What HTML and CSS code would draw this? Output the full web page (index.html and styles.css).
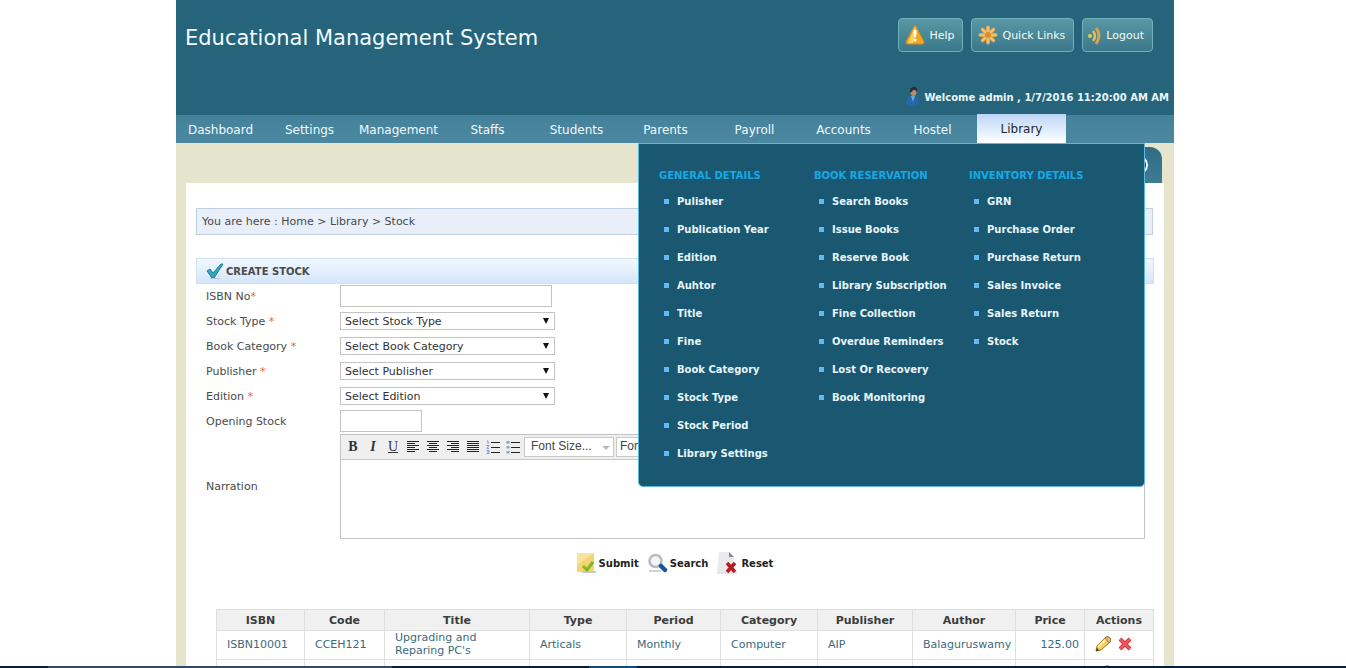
FILE: index.html
```
<!DOCTYPE html>
<html lang="en">
<head>
<meta charset="utf-8">
<title>Educational Management System</title>
<link rel="stylesheet" href="styles.css">
</head>
<body>
<div class="page">
  <header class="header">
    <h1 class="title">Educational Management System</h1>
    <div class="header-side">
      <div class="header-buttons">
        <button class="hbtn" type="button">
          <svg width="22" height="22" viewBox="0 0 22 22"><path d="M11 1 L20 18 Q20 20 18 20 H4 Q2 20 2 18 Z" fill="#f5a623" stroke="#e08a1c"/><path d="M11 3 L13 9 L9 19 H4 Z" fill="#ffd65c"/><path d="M9.500 6h3l-.5 7h-2z" fill="#fff"/><circle cx="11" cy="16" r="1.500" fill="#fff"/></svg>Help</button>
        <button class="hbtn" type="button">
          <svg width="22" height="22" viewBox="0 0 22 22"><g stroke="#dfa54e" stroke-width="4" stroke-linecap="round"><path d="M11 3.500v15M3.500 11h15M5.700 5.700l10.600 10.600M16.300 5.700L5.700 16.300"/></g><g stroke="#f0cb7a" stroke-width="1.500" stroke-linecap="round"><path d="M11 3v16M3 11h16M5.400 5.400l11.200 11.200M16.600 5.400L5.400 16.600"/></g><circle cx="11" cy="11" r="3" fill="#d98d2e"/></svg>Quick Links</button>
        <button class="hbtn hbtn-tight" type="button">
          <svg width="16" height="22" viewBox="0 0 16 22"><circle cx="3" cy="12" r="2" fill="#e8c850"/><path d="M6 7q4 5 0 10" fill="none" stroke="#e8c04c" stroke-width="2.400"/><path d="M9 4q6 7 0 16" fill="none" stroke="#dfa048" stroke-width="3"/></svg>Logout</button>
      </div>
      <p class="welcome">
        <svg width="14" height="20" viewBox="0 0 14 20"><path d="M0 18q0-9 5-9h3q5 0 5 9-6 2-13 0z" fill="#2368a8"/><path d="M5 9l2 6 2-6z" fill="#6fa9d6"/><ellipse cx="7.500" cy="5" rx="3" ry="4" fill="#b98c6e"/><path d="M4 5q0-5 4-5t3 5q-2-3-4-2-1 3-3 2z" fill="#222b33"/></svg>
        Welcome admin , 1/7/2016 11:20:00 AM AM</p>
    </div>
  </header>

  <nav class="nav">
    <a href="#">Dashboard</a><a href="#">Settings</a><a href="#">Management</a><a href="#">Staffs</a><a href="#">Students</a><a href="#">Parents</a><a href="#">Payroll</a><a href="#">Accounts</a><a href="#">Hostel</a><a href="#" class="active">Library</a>
    <div class="mega">
      <section>
        <h2>GENERAL DETAILS</h2>
        <ul>
          <li><a href="#">Pulisher</a></li><li><a href="#">Publication Year</a></li><li><a href="#">Edition</a></li><li><a href="#">Auhtor</a></li><li><a href="#">Title</a></li><li><a href="#">Fine</a></li><li><a href="#">Book Category</a></li><li><a href="#">Stock Type</a></li><li><a href="#">Stock Period</a></li><li><a href="#">Library Settings</a></li>
        </ul>
      </section>
      <section>
        <h2>BOOK RESERVATION</h2>
        <ul>
          <li><a href="#">Search Books</a></li><li><a href="#">Issue Books</a></li><li><a href="#">Reserve Book</a></li><li><a href="#">Library Subscription</a></li><li><a href="#">Fine Collection</a></li><li><a href="#">Overdue Reminders</a></li><li><a href="#">Lost Or Recovery</a></li><li><a href="#">Book Monitoring</a></li>
        </ul>
      </section>
      <section>
        <h2>INVENTORY DETAILS</h2>
        <ul>
          <li><a href="#">GRN</a></li><li><a href="#">Purchase Order</a></li><li><a href="#">Purchase Return</a></li><li><a href="#">Sales Invoice</a></li><li><a href="#">Sales Return</a></li><li><a href="#">Stock</a></li>
        </ul>
      </section>
    </div>
  </nav>

  <div class="tab-row"><div class="corner-tab"><svg width="22" height="22" viewBox="0 0 22 22"><circle cx="11" cy="11" r="9" fill="#17303c" stroke="#fff" stroke-width="2"/></svg></div></div>

  <main class="panel">
    <div class="crumbs">You are here : Home &gt; Library &gt; Stock</div>
    <h2 class="section-title">
      <svg width="18" height="18" viewBox="0 0 18 18"><path d="M1 9l3-2 3 4 8-9 2 0-9 14H6z" fill="#3aa6b9" stroke="#1d7f95"/><path d="M4 16.500h10" stroke="#b9c8d4"/></svg>CREATE STOCK</h2>

    <form class="form">
      <label for="isbn">ISBN No<span class="req">*</span></label>
      <input id="isbn" class="text wide" type="text">
      <label for="stype">Stock Type <span class="req">*</span></label>
      <div class="select"><select id="stype"><option>Select Stock Type</option></select></div>
      <label for="bcat">Book Category <span class="req">*</span></label>
      <div class="select"><select id="bcat"><option>Select Book Category</option></select></div>
      <label for="pub">Publisher <span class="req">*</span></label>
      <div class="select"><select id="pub"><option>Select Publisher</option></select></div>
      <label for="edn">Edition <span class="req">*</span></label>
      <div class="select"><select id="edn"><option>Select Edition</option></select></div>
      <label for="open">Opening Stock</label>
      <input id="open" class="text short" type="text">
      <label for="narr" class="mid">Narration</label>
      <div class="editor">
        <div class="toolbar">
          <button type="button" class="b" aria-label="Bold">B</button>
          <button type="button" class="i" aria-label="Italic">I</button>
          <button type="button" class="u" aria-label="Underline">U</button>
          <button type="button" aria-label="Align left"><svg width="14" height="12" viewBox="0 0 14 12"><path d="M1 .5h12M1 2.500h8M1 4.500h12M1 6.500h8M1 8.500h12M1 10.500h8" stroke="#222"/></svg></button>
          <button type="button" aria-label="Align center"><svg width="14" height="12" viewBox="0 0 14 12"><path d="M1 .5h12M3 2.500h8M1 4.500h12M3 6.500h8M1 8.500h12M3 10.500h8" stroke="#222"/></svg></button>
          <button type="button" aria-label="Align right"><svg width="14" height="12" viewBox="0 0 14 12"><path d="M1 .5h12M5 2.500h8M1 4.500h12M5 6.500h8M1 8.500h12M5 10.500h8" stroke="#222"/></svg></button>
          <button type="button" aria-label="Justify"><svg width="14" height="12" viewBox="0 0 14 12"><path d="M1 .5h12M1 2.500h12M1 4.500h12M1 6.500h12M1 8.500h12M1 10.500h12" stroke="#222"/></svg></button>
          <button type="button" aria-label="Numbered list"><svg width="14" height="14" viewBox="0 0 14 14"><path d="M5 2.500h9M5 7.500h9M5 12.500h9" stroke="#222"/><path d="M1 1h1v3M.5 5.500H3L1 8.500h2M.5 10.500H3v3H.5M1 12h2" fill="none" stroke="#7b9bd1"/></svg></button>
          <button type="button" aria-label="Bulleted list"><svg width="14" height="14" viewBox="0 0 14 14"><path d="M5 2.500h9M5 7.500h9M5 12.500h9" stroke="#222"/><path d="M.5 1h3v2.500h-3zM.5 6h3v2.500h-3zM.5 11h3v2.500h-3z" fill="#86a2d6"/></svg></button>
          <div class="tool-select"><select aria-label="Font size"><option>Font Size...</option></select></div>
          <div class="tool-select"><select aria-label="Font family"><option>Font Family.</option></select></div>
        </div>
        <textarea id="narr"></textarea>
      </div>
    </form>

    <div class="actions">
      <button type="button"><svg width="20" height="20" viewBox="0 0 20 20"><path d="M0 0h17v19H0z" fill="#f3d470"/><path d="M0 0h17L0 12z" fill="#f9e49a"/><path d="M5 19h14" stroke="#c9c9c9" stroke-width="2"/><path d="M6 13l4 4 6-8" fill="none" stroke="#7cb928" stroke-width="3"/></svg>Submit</button>
      <button type="button"><svg width="20" height="20" viewBox="0 0 20 20"><path d="M1 18h12" stroke="#d2d2d2" stroke-width="2"/><circle cx="7.500" cy="8" r="6" fill="#f2f6fa" stroke="#b9bcc2" stroke-width="2.500"/><path d="M13 13l4 4" stroke="#1b5797" stroke-width="4.500" stroke-linecap="round"/></svg>Search</button>
      <button type="button"><svg width="22" height="22" viewBox="0 0 22 22"><path d="M2 0h10l5 5v15H0z" fill="#e9eaec"/><path d="M12 0v5h5z" fill="#868b92"/><path d="M0 21h20" stroke="#ccc"/><path d="M10 11l8 9M18 11l-8 9" stroke="#b81c22" stroke-width="3.500"/></svg>Reset</button>
    </div>

    <table class="grid">
      <colgroup><col class="w88"><col class="w80"><col class="w145"><col class="w97"><col class="w94"><col class="w97"><col class="w95"><col class="w103"><col class="w69"><col class="w69"></colgroup>
      <thead><tr><th>ISBN</th><th>Code</th><th>Title</th><th>Type</th><th>Period</th><th>Category</th><th>Publisher</th><th>Author</th><th>Price</th><th>Actions</th></tr></thead>
      <tbody>
        <tr><td>ISBN10001</td><td>CCEH121</td><td>Upgrading and<br>Reparing PC's</td><td>Articals</td><td>Monthly</td><td>Computer</td><td>AIP</td><td>Balaguruswamy</td><td class="num">125.00</td>
          <td class="acts"><button type="button" aria-label="Edit"><svg width="16" height="16" viewBox="0 0 16 16"><path d="M1 15l1-5L11 1q2-1 4 1t0 4L6 14z" fill="#f6cf58" stroke="#9a7431"/><path d="M3 11L12 2" stroke="#fff0a8" stroke-width="2"/><path d="M11 1q2-1 4 1t0 4l-1 1-4-5z" fill="#e9b58a" stroke="#a3743f"/><path d="M1 15l1-3 2 2z" fill="#333"/></svg></button><button type="button" aria-label="Delete"><svg width="14" height="14" viewBox="0 0 14 14"><path d="M2 2l10 10M12 2L2 12" stroke="#d8343f" stroke-width="4"/><path d="M2 2l10 10M12 2L2 12" stroke="#ee5a62" stroke-width="2"/></svg></button></td></tr>
        <tr><td></td><td></td><td></td><td></td><td></td><td></td><td></td><td></td><td></td>
          <td class="acts"><button type="button" aria-label="Edit"><svg width="16" height="16" viewBox="0 0 16 16"><path d="M1 15l1-5L11 1q2-1 4 1t0 4L6 14z" fill="#f6cf58" stroke="#9a7431"/></svg></button><button type="button" aria-label="Delete"><svg width="14" height="14" viewBox="0 0 14 14"><path d="M2 2l10 10M12 2L2 12" stroke="#d8343f" stroke-width="4"/></svg></button></td></tr>
      </tbody>
    </table>
  </main>
</div>
<div class="taskbar"><span class="t1"></span><span class="t2"></span><span class="t3"></span><span class="t4"></span></div>
</body>
</html>
```
FILE: styles.css
```
* { box-sizing: border-box; }
body {
  margin: 0;
  padding-left: 4px;
  height: 100vh;
  overflow: hidden;
  background: #fff;
  color: #4a4a4a;
  font: 11px/13px "DejaVu Sans", Verdana, sans-serif;
}
h1, h2, p, ul { margin: 0; padding: 0; }
a { color: inherit; text-decoration: none; }
button, input, select, textarea { font: inherit; color: inherit; margin: 0; border-radius: 0; }
button { border: 0; background: none; padding: 0; }
svg { flex: none; display: block; }

.page { max-width: 998px; min-height: 100vh; margin: 0 auto; background: #e5e5ce; }

.header {
  display: flex;
  justify-content: space-between;
  height: 115px;
  padding: 0 5px 0 9px;
  background: #26647c;
}
.title { margin-top: 23px; color: #f2fbff; font-size: 21px; line-height: 30px; font-weight: 400; }
.header-side {
  display: flex;
  flex-direction: column;
  justify-content: space-between;
  align-items: flex-end;
  padding: 18px 0 8px;
}
.header-buttons { display: flex; gap: 8px; margin-right: 16px; }
.hbtn {
  display: flex;
  align-items: center;
  gap: 3px;
  height: 34px;
  padding: 0 8px 0 5px;
  border: 1px solid #6fb0bd;
  border-radius: 4px;
  background: linear-gradient(#5b98a5, #3a7789);
  color: #f4fbfd;
}
.hbtn-tight { padding-left: 4px; }
.welcome { display: flex; align-items: center; gap: 4px; color: #eaf6fa; font-size: 10px; font-weight: 700; }

.nav {
  position: relative;
  display: flex;
  height: 28px;
  background: linear-gradient(#44819b, #4c88a0);
  color: #f0fafe;
  font-size: 12px;
}
.nav > a { flex: none; width: 89px; line-height: 30px; text-align: center; }
.nav > .active { margin-top: -1px; background: linear-gradient(#bcd6f7, #fff); color: #1c2730; }
.mega {
  position: absolute;
  z-index: 2;
  top: 28px;
  right: 29px;
  display: flex;
  width: 507px;
  height: 344px;
  padding: 25px 20px 0;
  border: 1px solid #5cb8dc;
  border-radius: 0 0 5px 5px;
  background: #1a5872;
}
.mega section { flex: none; width: 155px; }
.mega h2 { color: #16a9e8; font-size: 10px; line-height: 14px; }
.mega ul { padding-top: 4px; list-style: none; }
.mega li {
  display: flex;
  align-items: center;
  gap: 8px;
  height: 28px;
  padding-left: 5px;
  color: #e8f5fa;
  font-size: 10px;
  font-weight: 700;
  white-space: nowrap;
}
.mega li::before { content: ""; width: 5px; height: 5px; background: #62baf0; }

.tab-row { display: flex; justify-content: flex-end; height: 40px; padding: 4px 12px 0; }
.corner-tab {
  display: flex;
  justify-content: flex-end;
  width: 60px;
  padding: 7px 13px;
  border-radius: 0 12px 0 0;
  background: linear-gradient(#2f6d85, #3f7c93);
}

.panel { min-height: calc(100vh - 183px); margin: 0 10px; padding: 25px 10px 0; background: #fff; }
.crumbs {
  margin-right: 1px;
  height: 27px;
  padding: 6px 5px;
  border: 1px solid #bfd1e0;
  background: #e8eff8;
}
.section-title {
  display: flex;
  align-items: center;
  gap: 2px;
  height: 26px;
  margin-top: 23px;
  padding-left: 9px;
  border: 1px solid #cfe0f1;
  background: linear-gradient(#f1f8ff, #d4e6fb);
  font-size: 10px;
}

.form {
  display: grid;
  grid-template-columns: 134px 1fr;
  grid-template-rows: repeat(6, 25px) 105px;
  align-items: start;
  padding: 0 9px 0 10px;
}
.form label { line-height: 26px; }
.form .mid { align-self: center; }
.req { color: #e8643c; }
.text { height: 22px; margin-top: 1px; border: 1px solid #c3c3c3; background: #fff; }
.wide { width: 212px; }
.short { width: 82px; }
.select { position: relative; width: 215px; height: 18px; margin-top: 3px; }
.select select {
  width: 100%;
  height: 18px;
  padding: 1px 4px 0;
  border: 1px solid #c3c3c3;
  background: #fff;
  color: #333;
  appearance: none;
}
.select::after {
  content: "";
  position: absolute;
  right: 6px;
  top: 6px;
  border: 3px solid transparent;
  border-top: 6px solid #111;
  border-bottom: 0;
  pointer-events: none;
}
.editor { display: flex; flex-direction: column; height: 105px; border: 1px solid #c3c3c3; }
.toolbar {
  display: flex;
  align-items: center;
  gap: 2px;
  height: 25px;
  padding-left: 3px;
  border-bottom: 1px solid #c9c9c9;
  background: #efefef;
}
.toolbar button {
  display: flex;
  align-items: center;
  justify-content: center;
  width: 18px;
  height: 20px;
  color: #333;
  font: 14px/18px "Liberation Serif", "Times New Roman", serif;
}
.toolbar .b { font-weight: 700; }
.toolbar .i { font-style: italic; font-weight: 700; }
.toolbar .u { text-decoration: underline; }
.tool-select { position: relative; width: 90px; height: 20px; }
.tool-select select {
  width: 100%;
  height: 20px;
  padding: 0 3px 2px 6px;
  border: 1px solid #c9c9c9;
  background: #fff;
  color: #444;
  font: 12px/16px "Liberation Sans", Arial, sans-serif;
  appearance: none;
}
.tool-select + .tool-select select { padding-left: 3px; }
.tool-select::after {
  content: "";
  position: absolute;
  right: 4px;
  top: 9px;
  border: 4px solid transparent;
  border-top: 4px solid #bbb;
  border-bottom: 0;
}
.editor textarea { flex: 1; border: 0; resize: none; outline: 0; }

.actions { display: flex; justify-content: center; gap: 9px; height: 70px; padding-top: 13px; }
.actions button {
  display: flex;
  align-items: center;
  gap: 2px;
  height: 22px;
  color: #222;
  font-size: 10px;
  font-weight: 700;
}

.grid { width: calc(100% - 21px); margin-left: 20px; table-layout: fixed; border-collapse: collapse; }
.w88 { width: 88px; } .w80 { width: 80px; } .w145 { width: 145px; } .w97 { width: 97px; }
.w94 { width: 94px; } .w95 { width: 95px; } .w103 { width: 103px; } .w69 { width: 69px; }
.grid th, .grid td { border: 1px solid #dfdfdf; }
.grid th { height: 21px; padding: 0; background: #f0f0f0; color: #3c3c3c; }
.grid td { height: 29px; padding: 0 0 2px 10px; color: #3a6a7c; white-space: nowrap; }
.grid .num { padding: 0 5px 2px 0; text-align: right; }
.acts button { display: inline-block; margin-right: 7px; vertical-align: middle; }

.taskbar { position: fixed; z-index: 3; left: 0; right: 0; bottom: 0; display: flex; height: 2px; background: #02203d; }
.t1 { width: 48px; }
.t2 { width: 344px; background: #2f4b6a; }
.t3 { width: 197px; }
.t4 { width: 48px; background: #0f4a78; }
```
